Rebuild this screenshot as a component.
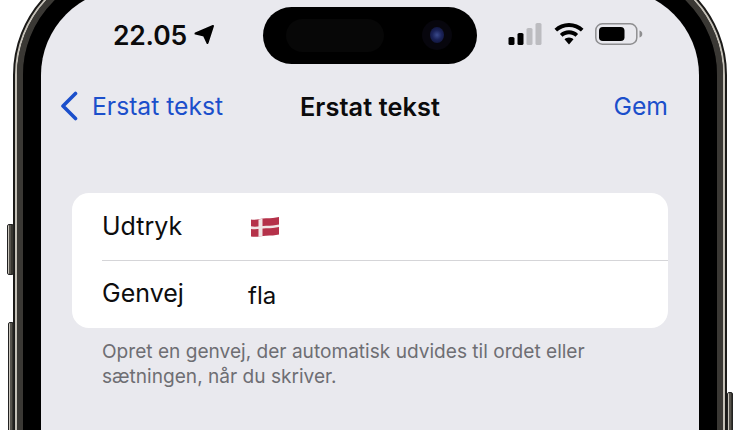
<div class="stage">
  <div class="btn b1"></div>
  <div class="btn b2"></div>
  <div class="btn b3"></div>
  <div class="phone">
    <div class="ring-light">
      <div class="ring-grey">
        <div class="bezel">
          <div class="screen">
            <div class="island">
              <div class="sensor"></div>
              <div class="camera"><div class="lens"></div></div>
            </div>
            <div class="status">
              <div class="left">
                <span class="time">22.05</span>
                <svg width="22" height="22" viewBox="0 0 22 22"><path d="M20 2 2.500 9.500l8.500 2 3.500 7.500z" fill="#000" stroke="#000" stroke-width="2" stroke-linejoin="round"/></svg>
              </div>
              <div class="right">
                <svg width="35" height="22" viewBox="0 0 35 22"><rect x="0.5" y="14" width="6" height="8" rx="1.600" fill="#000"/><rect x="9.500" y="10" width="6" height="12" rx="1.600" fill="#000"/><rect x="18.500" y="5" width="6" height="17" rx="1.600" fill="#bcbcc0"/><rect x="27.500" y="0" width="6" height="22" rx="1.600" fill="#bcbcc0"/></svg>
                <svg width="30" height="22" viewBox="0 0 30 22"><path d="M15 0C9.400 0 4.300 2.200.5 5.800l2.600 2.800C6.200 5.700 10.400 3.900 15 3.900s8.800 1.800 11.900 4.700l2.600-2.800C25.700 2.200 20.600 0 15 0z" fill="#000"/><path d="M15 7.300c-3.500 0-6.700 1.400-9.100 3.600l2.600 2.800c1.700-1.600 4-2.500 6.500-2.500s4.800.9 6.500 2.500l2.600-2.800c-2.400-2.200-5.600-3.600-9.100-3.600z" fill="#000"/><path d="M15 14.500c-1.800 0-3.400.7-4.500 1.800L15 21.500l4.500-5.200c-1.100-1.100-2.700-1.800-4.500-1.800z" fill="#000"/></svg>
                <svg width="48" height="22" viewBox="0 0 48 22"><rect x="0.800" y="0.800" width="41" height="20.400" rx="6.500" fill="none" stroke="#8e8e90" stroke-width="1.500"/><rect x="4" y="4" width="25.500" height="14" rx="3.800" fill="#000"/><path d="M44.500 7.500c1.700.5 2.800 1.800 2.800 3.500s-1.100 3-2.800 3.500z" fill="#8e8e90"/></svg>
              </div>
            </div>
            <div class="nav">
              <div class="back">
                <svg width="18" height="30" viewBox="0 0 18 30"><path d="M15.500 2.500 3 15l12.500 12.500" fill="none" stroke="#1b4fcb" stroke-width="3.600" stroke-linecap="round" stroke-linejoin="round"/></svg>
                <span>Erstat tekst</span>
              </div>
              <div class="title">Erstat tekst</div>
              <div class="save">Gem</div>
            </div>
            <div class="card">
              <div class="row">
                <span class="label">Udtryk</span>
                <svg class="flag" width="30" height="22" viewBox="0 0 30 22">
                  <path d="M1 3.500C6 4.500 11 2.500 16 2.300c5-.2 9-.4 13-1.300v17.500c-4 1-8 1-13 1.300-5 .3-10 1.700-15 .7z" fill="#b5324a"/>
                  <path d="M8.500 3.500l4-.7v17.300l-4 .6z" fill="#f1e6e6"/>
                  <path d="M1 10.300c5 1 10-.4 15-.6 5-.2 9-.4 13-1.300v2.600c-4 .9-8 1.100-13 1.300-5 .2-10 1.600-15 .6z" fill="#f1e6e6"/>
                </svg>
              </div>
              <div class="row second">
                <span class="label">Genvej</span>
                <span class="value">fla</span>
              </div>
            </div>
            <p class="note">Opret en genvej, der automatisk udvides til ordet eller<br>sætningen, når du skriver.</p>
          </div>
        </div>
      </div>
    </div>
  </div>
</div>

<style>
  :global(body) {
    margin: 0;
    background: #fff;
    overflow: hidden;
  }
  .stage {
    position: relative;
    width: 740px;
    height: 430px;
    overflow: hidden;
    font-family: Inter, "Liberation Sans", sans-serif;
  }
  .phone {
    box-sizing: border-box;
    width: 714px;
    height: 640px;
    margin: -39px 0 0 13px;
    border: 2px solid #1b1a18;
    border-radius: 114px;
    background: #1b1a18;
  }
  .ring-light {
    box-sizing: border-box;
    height: 100%;
    border: 2px solid #c4c0b7;
    border-radius: 112px;
  }
  .ring-grey {
    box-sizing: border-box;
    height: 100%;
    border: 6px solid #3a3834;
    border-radius: 110px;
  }
  .bezel {
    box-sizing: border-box;
    height: 100%;
    border: 18px solid #000;
    border-radius: 104px;
    background: #000;
  }
  .screen {
    position: relative;
    box-sizing: border-box;
    height: 100%;
    padding: 0 31px;
    border-radius: 86px;
    background: #e9e9ee;
    overflow: hidden;
  }
  .island {
    position: absolute;
    left: 222px;
    top: 18px;
    width: 214px;
    height: 57px;
    border-radius: 29px;
    background: #000;
  }
  .sensor {
    position: absolute;
    left: 23px;
    top: 12px;
    width: 98px;
    height: 33px;
    border-radius: 17px;
    background: #070707;
  }
  .camera {
    position: absolute;
    left: 159px;
    top: 13px;
    width: 30px;
    height: 30px;
    border-radius: 50%;
    background: #07060d;
    display: flex;
    align-items: center;
    justify-content: center;
  }
  .lens {
    width: 14px;
    height: 16px;
    border-radius: 50%;
    background: radial-gradient(circle, #3a4a8c 0, #1a2258 45%, #0c0f2c 100%);
  }
  .status {
    display: flex;
    justify-content: space-between;
    align-items: center;
    height: 32px;
    padding: 30px 25px 0 41px;
  }
  .left {
    display: flex;
    align-items: center;
    gap: 6px;
  }
  .time {
    font-size: 26.500px;
    font-weight: 600;
    color: #0b0b0c;
    letter-spacing: -0.2px;
  }
  .right {
    display: flex;
    align-items: center;
    gap: 11px;
    margin-bottom: 2px;
  }
  .nav {
    display: grid;
    grid-template-columns: 1fr auto 1fr;
    align-items: center;
    height: 40px;
    margin-top: 35px;
    font-size: 24.700px;
  }
  .back {
    display: flex;
    align-items: center;
    gap: 14px;
    margin-left: -12px;
    color: #1b4fcb;
  }
  .title {
    font-size: 25.300px;
    font-weight: 600;
    color: #0b0b0c;
    letter-spacing: 0.1px;
  }
  .save {
    justify-self: end;
    font-size: 24.700px;
    color: #1b4fcb;
  }
  .card {
    margin-top: 67px;
    border-radius: 17px;
    background: #fff;
    overflow: hidden;
  }
  .row {
    display: flex;
    align-items: center;
    height: 67px;
    margin-left: 30px;
    font-size: 25px;
    color: #0d0d0e;
  }
  .second {
    border-top: 1px solid #d5d5d8;
  }
  .label {
    width: 146px;
    margin-bottom: 2px;
  }
  .second .label {
    margin-bottom: 4px;
  }
  .flag {
    margin-left: 2px;
  }
  .value {
    margin-top: 2px;
    font-size: 24px;
  }
  .note {
    margin: 11px 0 0 30px;
    font-size: 19.100px;
    line-height: 24.500px;
    color: #6e6e73;
  }
  .btn {
    position: absolute;
    background: linear-gradient(90deg, #c9c5bc 0 1px, #55524c 1px 3px, #37352f 3px);
    border: 1px solid #222;
    border-radius: 2px;
  }
  .b1 { left: 7px; top: 224px; width: 5px; height: 49px; }
  .b2 { left: 8px; top: 322px; width: 4px; height: 108px; }
  .b3 { left: 727px; top: 392px; width: 4px; height: 60px; }
</style>
